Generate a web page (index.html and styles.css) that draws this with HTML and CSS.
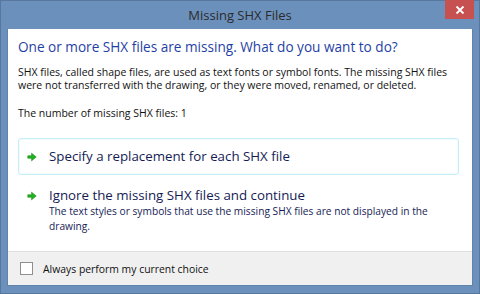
FILE: index.html
```html
<!DOCTYPE html>
<html lang="en">
<head>
    <meta charset="UTF-8">
    <title>Missing SHX Files</title>
    <link rel="stylesheet" href="styles.css">
</head>
<body>
    <div class="window">
        <!-- title bar -->
        <div class="titlebar">
            <span class="title">Missing SHX Files</span>
            <div class="close-btn">
                <svg width="10" height="10" viewBox="0 0 10 10">
                    <path d="M1.5 1.5 L8.5 8.5 M8.5 1.5 L1.5 8.5" stroke="#fff" stroke-width="1.8"/>
                </svg>
            </div>
        </div>

        <!-- dialog body -->
        <div class="content">
            <div class="main">
                <h1 class="instruction">One or more SHX files are missing. What do you want to do?</h1>
                <p class="desc">SHX files, called shape files, are used as text fonts or symbol fonts. The missing SHX files were not transferred with the drawing, or they were moved, renamed, or deleted.</p>
                <p class="desc count">The number of missing SHX files: 1</p>

                <div class="command-link hovered">
                    <svg class="arrow" width="10" height="10" viewBox="0 0 10 10">
                        <path d="M0.8 3.8 H4.6 V1.2 L9.2 5 L4.6 8.8 V6.2 H0.8 Z" fill="#22b322" stroke="#128c12" stroke-width="0.6"/>
                    </svg>
                    <div class="link-text">
                        <div class="link-title">Specify a replacement for each SHX file</div>
                    </div>
                </div>

                <div class="command-link">
                    <svg class="arrow" width="10" height="10" viewBox="0 0 10 10">
                        <path d="M0.8 3.8 H4.6 V1.2 L9.2 5 L4.6 8.8 V6.2 H0.8 Z" fill="#22b322" stroke="#128c12" stroke-width="0.6"/>
                    </svg>
                    <div class="link-text">
                        <div class="link-title">Ignore the missing SHX files and continue</div>
                        <div class="link-note">The text styles or symbols that use the missing SHX files are not displayed in the drawing.</div>
                    </div>
                </div>
            </div>

            <!-- footer -->
            <div class="footer">
                <label class="check">
                    <span class="box"></span>
                    <span>Always perform my current choice</span>
                </label>
            </div>
        </div>
    </div>
</body>
</html>
```

FILE: styles.css
```css
/* dialog window */
body {
    margin: 0;
    font-family: 'Open Sans', 'Noto Sans', sans-serif;
    background: #6a8fba;
}

.window {
    width: 480px;
    height: 294px;
    box-sizing: border-box;
    background: #6b90bb;
    border: 1px solid #58779c;
    padding: 0 6px 7px;
    display: flex;
    flex-direction: column;
    position: relative;
}

/* title bar */
.titlebar {
    height: 28px;
    display: flex;
    align-items: center;
    justify-content: center;
    flex-shrink: 0;
}

.title {
    font-size: 13px;
    color: #2b2b2b;
    margin-top: -1px;
}

.close-btn {
    position: absolute;
    top: -1px;
    right: 5px;
    width: 29px;
    height: 19px;
    background: #c75050;
    display: flex;
    align-items: center;
    justify-content: center;
}

/* content */
.content {
    flex: 1;
    background: #fff;
    display: flex;
    flex-direction: column;
    border: 1px solid #5f83ad;
    border-top: none;
}

.main {
    flex: 1;
    padding: 9px 10px 0 10px;
}

.instruction {
    margin: 0 0 10px;
    font-size: 13.6px;
    font-weight: normal;
    color: #1f3fa5;
    line-height: 18px;
}

.desc {
    margin: 0;
    max-width: 430px;
    font-size: 10.5px;
    line-height: 13px;
    color: #111;
}

.desc.count {
    margin-top: 15px;
    margin-bottom: 18px;
}

/* command links */
.command-link {
    display: flex;
    align-items: flex-start;
    padding: 9px 8px 9px 8px;
    margin-bottom: 2px;
    border: 1px solid transparent;
    border-radius: 3px;
    margin-right: 3px;
}

.command-link.hovered {
    border-color: #c6eef9;
    box-shadow: inset 0 0 0 1px #f2fbfe;
}

.arrow {
    margin-top: 4px;
    margin-right: 12px;
    flex-shrink: 0;
}

.link-title {
    font-size: 13.3px;
    line-height: 17px;
    color: #151c55;
}

.link-note {
    font-size: 10.2px;
    line-height: 15px;
    color: #151c55;
}

/* footer */
.footer {
    height: 33px;
    background: #f0f0f0;
    border-top: 1px solid #dfdfdf;
    display: flex;
    align-items: center;
    padding-left: 12px;
    flex-shrink: 0;
}

.check {
    display: flex;
    align-items: center;
    font-size: 10.4px;
    color: #111;
}

.check .box {
    width: 11px;
    height: 11px;
    border: 1px solid #8f8f8f;
    background: #fff;
    margin-right: 10px;
}
```
